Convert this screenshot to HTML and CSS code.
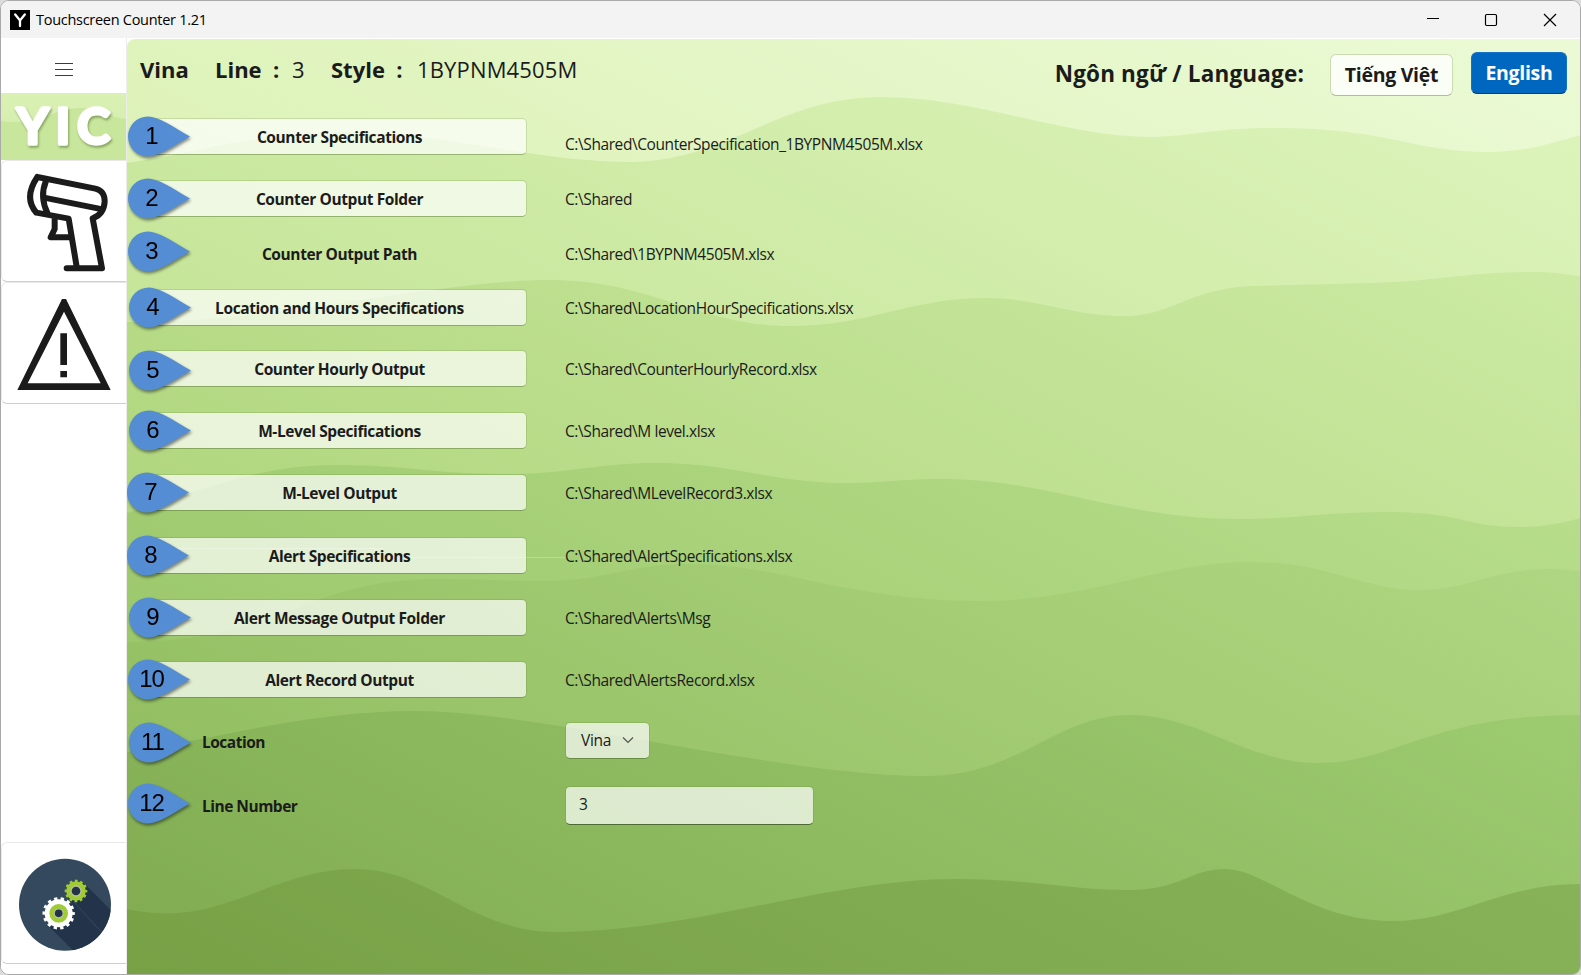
FILE: index.html
```html
<!DOCTYPE html>
<html lang="en">
<head>
<meta charset="utf-8">
<title>Touchscreen Counter 1.21</title>
<link rel="stylesheet" href="styles.css">
</head>
<body>
<div class="window">
  <header class="titlebar">
    <svg class="app-icon" viewBox="0 0 20 20"><rect width="20" height="20" fill="#000"/><path d="M5.2 4.5 10 10.5 14.8 4.5M10 10.5V16" fill="none" stroke="#fff" stroke-width="2.3" stroke-linecap="round"/></svg>
    <span class="app-title">Touchscreen Counter 1.21</span>
    <div class="controls">
      <svg viewBox="0 0 14 14"><path d="M2 5.500H14" /></svg>
      <svg viewBox="0 0 14 14"><rect x="1.5" y="1.5" width="11" height="11" rx="1.2"/></svg>
      <svg viewBox="0 0 14 14"><path d="M1 1 13 13M13 1 1 13"/></svg>
    </div>
  </header>
  <div class="body">
    <nav class="sidebar">
      <div class="menu"><svg viewBox="0 0 18 14"><path d="M0 .5H18M0 6.500H18M0 12.500H18"/></svg></div>
      <svg class="brand" viewBox="0 0 125 67">
        <defs><linearGradient id="bt" x1="0" y1="0" x2="0" y2="1"><stop offset="0" stop-color="#daf1b4"/><stop offset="1" stop-color="#d0eaa8"/></linearGradient></defs>
        <rect width="125" height="67" fill="url(#bt)"/>
        <path d="M0 28C35 34 50 16 80 15C100 16 110 25 125 26V67H0Z" fill="#c8e69c"/>
        <text class="brand-text" x="15.500 54.500 76" y="51">YIC</text>
      </svg>
      <div class="card">
        <svg viewBox="3 15 375 363" fill="none" stroke="#1b1b1b" stroke-width="18" stroke-linecap="round" stroke-linejoin="round">
          <path d="M112 66 286 101Q314 107 314 140Q312 178 278 190L306 340H200M230 335 206 191 109 173Q70 128 112 66"/>
          <path d="M138 78Q118 125 143 176" stroke-linecap="butt"/><path d="M132 128 308 163" stroke-linecap="butt"/>
          <path d="M164 190V222L152 247H212" stroke-linecap="butt"/>
        </svg>
      </div>
      <div class="card">
        <svg viewBox="3 381 375 363"><path fill="#1b1b1b" fill-rule="evenodd" d="M186 432H198L332 705H52ZM192 470 83 685H302ZM181 535H201V630H181ZM181 648H201V667H181Z"/></svg>
      </div>
      <div class="card last">
        <svg viewBox="3 67 375 363">
          <defs><clipPath id="disc"><circle cx="195" cy="255" r="138"/></clipPath></defs>
          <circle cx="195" cy="255" r="138" fill="#34495d"/>
          <g clip-path="url(#disc)" fill="#23344a">
            <path d="M205 238 252 191 452 391 405 438Z"/><path d="M142 315 216 249 416 449 342 515Z"/>
            <path d="M222 247 330 365" stroke="#34495d" stroke-width="3"/>
          </g>
          <circle cx="228" cy="214" r="22" fill="#23344a" stroke="#9fcc35" stroke-width="15"/>
          <circle cx="228" cy="214" r="30" pathLength="24" fill="none" stroke="#9fcc35" stroke-width="8" stroke-dasharray="1 1" stroke-dashoffset=".5"/>
          <circle cx="228" cy="214" r="15" fill="#23344a" stroke="#b9bf9b" stroke-width="4"/>
          <circle cx="176" cy="281" r="42" fill="#fff"/>
          <circle cx="176" cy="281" r="44" pathLength="28" fill="none" stroke="#fff" stroke-width="9" stroke-dasharray="1 1" stroke-dashoffset=".5"/>
          <circle cx="176" cy="281" r="28" fill="#9fcc35"/>
          <circle cx="176" cy="281" r="13.500" fill="#23344a" stroke="#b9bf9b" stroke-width="4"/>
        </svg>
      </div>
    </nav>
    <main class="content">
      <svg class="hills" viewBox="127 39 1453 935" preserveAspectRatio="none">
        <defs>
          <linearGradient id="g0" gradientUnits="userSpaceOnUse" x1="127" y1="150" x2="462" y2="-520"><stop stop-color="#ddf2b8"/><stop offset="1" stop-color="#ebfad5"/></linearGradient>
          <linearGradient id="g1" gradientUnits="userSpaceOnUse" x1="127" y1="320" x2="489" y2="-405"><stop stop-color="#c5e598"/><stop offset="1" stop-color="#dcf3ba"/></linearGradient>
          <linearGradient id="g2" gradientUnits="userSpaceOnUse" x1="127" y1="510" x2="509" y2="-255"><stop stop-color="#b0d67e"/><stop offset="1" stop-color="#cceaa3"/></linearGradient>
          <linearGradient id="g3" gradientUnits="userSpaceOnUse" x1="127" y1="640" x2="465" y2="-37"><stop stop-color="#9cc86c"/><stop offset="1" stop-color="#b7dd8b"/></linearGradient>
          <linearGradient id="g4" gradientUnits="userSpaceOnUse" x1="127" y1="740" x2="485" y2="23"><stop stop-color="#93bf62"/><stop offset="1" stop-color="#afd682"/></linearGradient>
          <linearGradient id="g5" gradientUnits="userSpaceOnUse" x1="127" y1="900" x2="491" y2="171"><stop stop-color="#82ad53"/><stop offset="1" stop-color="#9dcb70"/></linearGradient>
          <linearGradient id="g6" gradientUnits="userSpaceOnUse" x1="127" y1="974" x2="447" y2="334"><stop stop-color="#78a146"/><stop offset="1" stop-color="#87b258"/></linearGradient>
        </defs>
        <rect x="127" y="39" width="1453" height="935" fill="url(#g0)"/>
        <path fill="url(#g1)" d="M127 163C210 150 260 132 340 132C450 132 530 162 633 162C730 160 780 97 880 97C980 97 1060 137 1155 137C1200 135 1215 128 1275 128C1390 128 1410 152 1490 152C1530 152 1560 140 1581 135V975H127Z"/>
        <path fill="url(#g2)" d="M127 322C260 325 440 280 550 280C650 280 700 326 790 326C870 326 910 298 985 298C1040 298 1070 316 1125 316C1175 316 1190 286 1260 286C1310 284 1370 284 1410 281C1450 278 1480 272 1535 272Q1560 272 1581 277V975H127Z"/>
        <path fill="url(#g3)" d="M127 513C210 488 260 465 335 465C410 465 430 474 510 474C565 474 600 463 655 463C735 463 770 483 850 483C880 483 900 479 940 479C1050 479 1120 519 1240 519C1300 519 1320 512 1390 512C1460 512 1465 527 1520 527Q1550 527 1581 518V975H127Z"/>
        <path fill="url(#g4)" d="M127 642C290 640 300 579 440 579C480 579 500 581 540 581C610 581 625 564 690 564C780 564 850 601 980 601C1090 601 1160 562 1250 562C1330 562 1360 590 1420 590C1470 590 1490 569 1550 569Q1570 569 1581 572V975H127Z"/>
        <path fill="url(#g5)" d="M127 752C220 738 310 711 415 711C540 711 780 776 925 776C1020 776 1055 715 1130 715C1200 715 1245 763 1320 763C1395 763 1430 715 1581 715V975H127Z"/>
        <path fill="url(#g6)" d="M127 909C220 930 270 869 355 869C430 869 470 932 557 932C690 932 830 879 955 879C1030 879 1070 890 1130 890C1180 890 1190 869 1225 869C1265 869 1310 921 1392 921C1460 921 1500 884 1581 884V975H127Z"/>
        <path d="M405 557.500H565M165 548.500H385" fill="none" stroke="#fff" stroke-opacity=".25"/>
      </svg>

      <div class="topline">
        <div class="status">
          <b class="s-site">Vina</b><b class="s-line">Line&nbsp; :</b><span class="s-num">3</span><b class="s-style">Style&nbsp; :</b><span class="s-code">1BYPNM4505M</span>
        </div>
        <div class="language">
          <b class="lang-label">Ngôn ngữ / Language:</b>
          <button class="lang">Tiếng Việt</button>
          <button class="lang active">English</button>
        </div>
      </div>

      <svg class="defs" width="0" height="0"><symbol id="drop" viewBox="0 0 64 44"><path d="M21 1.500C31 1.500 45 11 63 21.500C45 32 31 41.500 21 41.500A20 20 0 0 1 21 1.500Z" fill="#548dd4"/></symbol></svg>

      <div class="rows">
        <div class="row first"><i class="pin"><svg><use href="#drop"/></svg><em>1</em></i><button class="pick">Counter Specifications</button><span class="path">C:\Shared\CounterSpecification_1BYPNM4505M.xlsx</span></div>
        <div class="row"><i class="pin"><svg><use href="#drop"/></svg><em>2</em></i><button class="pick">Counter Output Folder</button><span class="path">C:\Shared</span></div>
        <div class="row"><i class="pin up"><svg><use href="#drop"/></svg><em>3</em></i><span class="pick plain">Counter Output Path</span><span class="path">C:\Shared\1BYPNM4505M.xlsx</span></div>
        <div class="row"><i class="pin right"><svg><use href="#drop"/></svg><em>4</em></i><button class="pick">Location and Hours Specifications</button><span class="path">C:\Shared\LocationHourSpecifications.xlsx</span></div>
        <div class="row"><i class="pin right down"><svg><use href="#drop"/></svg><em>5</em></i><button class="pick">Counter Hourly Output</button><span class="path">C:\Shared\CounterHourlyRecord.xlsx</span></div>
        <div class="row"><i class="pin right"><svg><use href="#drop"/></svg><em>6</em></i><button class="pick">M-Level Specifications</button><span class="path">C:\Shared\M level.xlsx</span></div>
        <div class="row"><i class="pin left"><svg><use href="#drop"/></svg><em>7</em></i><button class="pick">M-Level Output</button><span class="path">C:\Shared\MLevelRecord3.xlsx</span></div>
        <div class="row"><i class="pin left"><svg><use href="#drop"/></svg><em>8</em></i><button class="pick">Alert Specifications</button><span class="path">C:\Shared\AlertSpecifications.xlsx</span></div>
        <div class="row"><i class="pin right"><svg><use href="#drop"/></svg><em>9</em></i><button class="pick">Alert Message Output Folder</button><span class="path">C:\Shared\Alerts\Msg</span></div>
        <div class="row"><i class="pin"><svg><use href="#drop"/></svg><em>10</em></i><button class="pick">Alert Record Output</button><span class="path">C:\Shared\AlertsRecord.xlsx</span></div>
        <div class="row"><i class="pin right low"><svg><use href="#drop"/></svg><em>11</em></i><span class="label">Location</span><button class="combo">Vina<svg viewBox="0 0 12 8"><path d="M1 1.500 6 6.500 11 1.500"/></svg></button></div>
        <div class="row"><i class="pin"><svg><use href="#drop"/></svg><em>12</em></i><span class="label">Line Number</span><div class="field">3</div></div>
      </div>
    </main>
  </div>
</div>
</body>
</html>
```
FILE: styles.css
```css
* { box-sizing: border-box; }
body {
  margin: 0;
  width: 1581px;
  height: 975px;
  overflow: hidden;
  background: #dcdcdc;
  font-family: "Segoe UI", "Open Sans", "Noto Sans", sans-serif;
  color: #1b1b1b;
}
button { font: inherit; color: inherit; padding: 0; }
svg { display: block; }
.window {
  width: 1581px;
  height: 975px;
  border: 1px solid #a9a9a9;
  border-radius: 9px;
  overflow: hidden;
  display: flex;
  flex-direction: column;
  background: #fff;
}
.titlebar {
  height: 37px;
  flex: none;
  background: #f3f3f3;
  display: flex;
  align-items: center;
  padding: 0 23px 0 9px;
}
.app-icon { width: 20px; height: 20px; margin-right: 6px; }
.app-title { font-size: 14.5px; letter-spacing: -.28px; color: #000; }
.controls { margin-left: auto; display: flex; gap: 45px; }
.controls svg { width: 14px; height: 14px; fill: none; stroke: #000; stroke-width: 1.2; }
.body { flex: 1; display: flex; min-height: 0; }

.sidebar {
  width: 126px;
  display: flex;
  flex-direction: column;
  background: #fff;
  border-right: 1px solid #ececec;
  padding-bottom: 10px;
}
.menu { height: 55px; padding: 25px 0 0 54px; }
.menu svg { width: 18px; height: 14px; stroke: #3c3c3c; stroke-width: 1; }
.brand { width: 125px; height: 67px; flex: none; }
.brand-text {
  font: 700 50px "Lato", "Open Sans", sans-serif;
  fill: #fff;
  stroke: #fff;
  stroke-width: 3.4px;
  stroke-linejoin: round;
  filter: drop-shadow(1px 2px 1px rgba(70, 100, 40, .5));
}
.card {
  height: 122px;
  flex: none;
  border: 1px solid #e9e9e9;
  border-bottom-color: #cfcfcf;
  border-right: 0;
  border-radius: 6px 0 0 6px;
}
.card svg { width: 125px; height: 121px; margin: -1px 0 0 -1px; }
.card.last { margin-top: auto; }

.content {
  position: relative;
  flex: 1;
  margin-top: 1px;
  border-radius: 8px 0 0 0;
  overflow: hidden;
}
.hills { position: absolute; inset: 0; width: 100%; height: 100%; }
.defs { position: absolute; }
.topline {
  position: relative;
  height: 79px;
  display: flex;
  justify-content: space-between;
  padding: 0 13px 0 13px;
}
.status { display: flex; height: 60px; align-items: center; font-size: 22px; white-space: nowrap; }
.s-site { width: 75px; }
.s-line { width: 77px; }
.s-num { width: 39px; }
.s-style { width: 86px; }
.s-code { letter-spacing: .15px; }
.language { display: flex; align-items: flex-start; padding-top: 13px; }
.lang-label { font-size: 22.5px; line-height: 44px; letter-spacing: .18px; margin-right: 26px; white-space: nowrap; }
.lang {
  width: 123px;
  height: 42px;
  margin-top: 2px;
  margin-right: 18px;
  padding-bottom: 2px;
  border: 1px solid rgba(120, 130, 100, .25);
  border-bottom-color: rgba(90, 100, 70, .4);
  border-radius: 6px;
  background: rgba(255, 255, 255, .8);
  background-clip: padding-box;
  font-size: 19.5px;
  font-weight: 700;
  letter-spacing: -.3px;
}
.lang.active {
  width: 96px;
  margin: 0;
  background: #0067c0;
  background-clip: border-box;
  border-color: #1473c5;
  border-bottom-color: #003e73;
  color: #fff;
}

.rows {
  position: relative;
  display: grid;
  grid-template-rows: 62px 55px 54px 61px 62px 62px 63px 62px 62px 62px 62px 39px;
}
.row {
  position: relative;
  height: 37px;
  display: flex;
  align-items: center;
  padding-left: 25px;
}
.pick {
  width: 375px;
  height: 37px;
  line-height: 34px;
  text-align: center;
  border: 1px solid rgba(90, 120, 50, .18);
  border-bottom-color: rgba(70, 95, 40, .4);
  border-radius: 5px;
  background: rgba(255, 255, 255, .7);
  background-clip: padding-box;
  font-size: 15.5px;
  font-weight: 700;
  letter-spacing: -.4px;
}
.pick.plain { background: none; border-color: transparent; line-height: 37px; }
.path { margin-left: 38px; padding-top: 1px; font-size: 15.5px; letter-spacing: -.41px; white-space: nowrap; }
.first .path { padding-top: 15px; }
.label {
  flex: none;
  width: 363px;
  margin-left: 50px;
  padding-top: 1px;
  font-size: 15.5px;
  font-weight: 700;
  letter-spacing: -.5px;
}
.combo, .field {
  flex: none;
  border: 1px solid rgba(90, 120, 50, .18);
  border-bottom-color: rgba(70, 95, 40, .5);
  border-radius: 5px;
  background: rgba(255, 255, 255, .7);
  background-clip: padding-box;
  font-size: 15.5px;
}
.combo {
  width: 85px;
  height: 37px;
  margin-top: -2px;
  display: flex;
  align-items: center;
  padding: 0 0 1px 15px;
  gap: 11px;
  letter-spacing: -.3px;
}
.combo svg { width: 12px; height: 8px; fill: none; stroke: #555; stroke-width: 1.2; }
.field { width: 249px; height: 39px; line-height: 34px; padding-left: 13px; border-bottom-color: #4f6b35; }
.row:last-child { height: 40px; }

.pin {
  position: absolute;
  left: 0;
  top: -3px;
  width: 64px;
  height: 44px;
  z-index: 1;
  font-style: normal;
  filter: drop-shadow(1px 2px 1.5px rgba(0, 0, 0, .45));
}
.pin svg { width: 64px; height: 44px; }
.pin em {
  position: absolute;
  left: 4px;
  top: 7px;
  width: 41px;
  text-align: center;
  font: 24px/27px "Liberation Sans", Arial, sans-serif;
  letter-spacing: -1px;
  color: #000;
}
.pin.right { left: 1px; }
.pin.left { left: -1px; }
.pin.up { top: -5px; }
.pin.down { top: -1px; }
.pin.low { top: -2px; }
```
